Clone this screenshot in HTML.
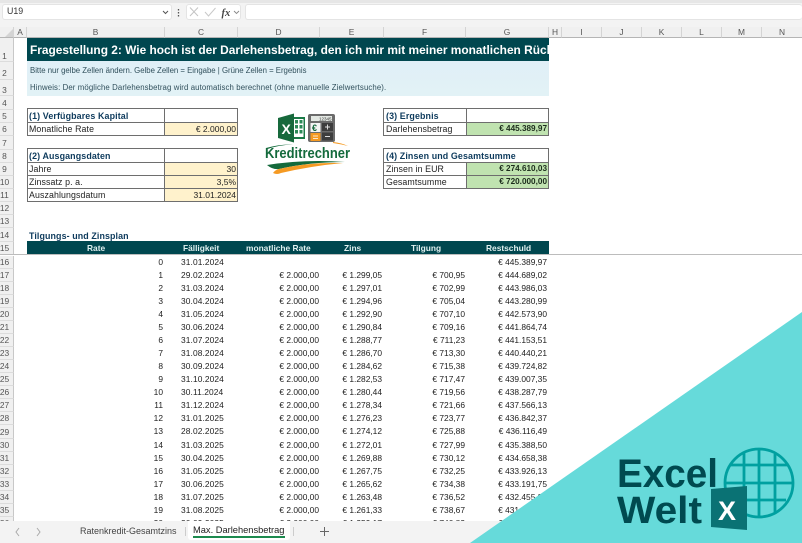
<!DOCTYPE html>
<html lang="de"><head><meta charset="utf-8"><title>Kreditrechner</title>
<style>
*{box-sizing:border-box}
html,body{margin:0;padding:0;background:#fff}
body{position:relative;width:802px;height:543px;overflow:hidden;font-family:"Liberation Sans",sans-serif;font-size:8.4px;color:#222}
div,span{white-space:nowrap}
.top{position:absolute;left:0;top:0;width:802px;height:27px;background:#f3f3f3;border-top:3px solid #e6e6e6}
.box{background:#fff;border:1px solid #e4e4e4;border-radius:3px;height:16px;top:4px;position:absolute}
.ch{top:27px;height:11px;background:#f0f0f0;border-right:1px solid #d4d4d4;border-bottom:1px solid #b5b5b5;text-align:center;font-size:8.4px;line-height:11px;color:#555;position:absolute}
.rh{left:0;width:14px;background:#f0f0f0;border-bottom:1px solid #dcdcdc;border-right:1px solid #c8c8c8;font-size:8.4px;color:#555;text-align:center;position:absolute;padding-right:4px;display:flex;align-items:center;justify-content:center}
.c{position:absolute;height:14px;line-height:12.5px;border:1px solid #6e6e6e;padding:0 2px;font-size:8.8px;color:#222;background:#fff}
.c.h15{height:15px;line-height:14px}
.l{letter-spacing:.1px}
.n{padding-left:1px}
.hd{font-weight:bold;color:#0d3a5c;font-size:8.9px;letter-spacing:.12px}
.y{background:#fff2cc;text-align:right;padding-right:1px;font-size:8.5px}
.g{background:#c0e3b0;text-align:right;font-weight:bold;padding-right:1px;color:#1c2c1c;font-size:8.2px}
.row{position:absolute;left:27px;width:522px;height:13px;line-height:13px;font-size:8.4px;color:#222}
.row span{position:absolute;top:0}
.a{right:386px}.b{left:154px;letter-spacing:.1px}.m{right:230px}.z{right:167px}.t{right:84px}.r{right:2px}
.th span{color:#e0f0f0;font-weight:bold;font-size:8.4px;line-height:14px}
</style></head><body>

<!-- Formula bar -->
<div class="top"></div>
<div class="box" style="left:2px;width:170px"></div>
<div style="position:absolute;left:7px;top:6px;font-size:8.8px;color:#333">U19</div>
<svg style="position:absolute;left:0;top:0" width="250" height="27" fill="none">
<path d="M163 11l2.500 2.500 2.500-2.500" stroke="#555" stroke-width="1"/>
<path d="M178.500 9v1.500M178.500 12v1.500M178.500 15v1.500" stroke="#555" stroke-width="1.300"/>
</svg>
<div class="box" style="left:186px;width:55px"></div>
<div class="box" style="left:245px;width:557px;border-right:0"></div>
<svg style="position:absolute;left:186px;top:4px" width="56" height="16" fill="none">
<path d="M4 3.500l8 8.500M12 3.500l-8 8.500" stroke="#c4c4c4" stroke-width="1"/>
<path d="M19 8l3.500 4 7-8" stroke="#c8c8c8" stroke-width="1"/>
<path d="M48 7l2.500 2.500 2.500-2.500" stroke="#888" stroke-width=".9"/>
<text x="35.500" y="12" font-family="Liberation Serif,serif" font-style="italic" font-weight="bold" font-size="10.500" fill="#444">fx</text>
</svg>

<!-- Column headers -->
<div class="ch" style="left:0;width:14px"></div>
<svg style="position:absolute;left:5px;top:29px" width="9" height="8"><path d="M8 0v8H0z" fill="#d4d4d4"/></svg>
<div class="ch" style="left:14px;width:13px">A</div>
<div class="ch" style="left:27px;width:138px">B</div>
<div class="ch" style="left:165px;width:73px">C</div>
<div class="ch" style="left:238px;width:82px">D</div>
<div class="ch" style="left:320px;width:64px">E</div>
<div class="ch" style="left:384px;width:82px">F</div>
<div class="ch" style="left:466px;width:83px">G</div>
<div class="ch" style="left:549px;width:13px">H</div>
<div class="ch" style="left:562px;width:40px">I</div>
<div class="ch" style="left:602px;width:40px">J</div>
<div class="ch" style="left:642px;width:40px">K</div>
<div class="ch" style="left:682px;width:40px">L</div>
<div class="ch" style="left:722px;width:40px">M</div>
<div class="ch" style="left:762px;width:40px;border-right:0">N</div>

<!-- Row headers -->
<div class="rh" style="top:38px;height:24px;align-items:flex-end">1</div>
<div class="rh" style="top:62px;height:18px;align-items:flex-end;padding-bottom:1px">2</div>
<div class="rh" style="top:80px;height:16px;align-items:flex-end">3</div>
<div class="rh" style="top:96px;height:14px">4</div>
<div class="rh" style="top:110px;height:13px">5</div>
<div class="rh" style="top:123px;height:13px">6</div>
<div class="rh" style="top:136px;height:14px">7</div>
<div class="rh" style="top:150px;height:13px">8</div>
<div class="rh" style="top:163px;height:13px">9</div>
<div class="rh" style="top:176px;height:13px">10</div>
<div class="rh" style="top:189px;height:13px">11</div>
<div class="rh" style="top:202px;height:13px">12</div>
<div class="rh" style="top:215px;height:13px">13</div>
<div class="rh" style="top:228px;height:14px">14</div>
<div class="rh" style="top:242px;height:13px">15</div>
<div class="rh" style="top:256px;height:13px">16</div>
<div class="rh" style="top:269px;height:13px">17</div>
<div class="rh" style="top:282px;height:13px">18</div>
<div class="rh" style="top:295px;height:13px">19</div>
<div class="rh" style="top:308px;height:13px">20</div>
<div class="rh" style="top:321px;height:13px">21</div>
<div class="rh" style="top:334px;height:13px">22</div>
<div class="rh" style="top:347px;height:13px">23</div>
<div class="rh" style="top:360px;height:13px">24</div>
<div class="rh" style="top:373px;height:13px">25</div>
<div class="rh" style="top:386px;height:13px">26</div>
<div class="rh" style="top:399px;height:13px">27</div>
<div class="rh" style="top:412px;height:13px">28</div>
<div class="rh" style="top:425px;height:14px">29</div>
<div class="rh" style="top:439px;height:13px">30</div>
<div class="rh" style="top:452px;height:13px">31</div>
<div class="rh" style="top:465px;height:13px">32</div>
<div class="rh" style="top:478px;height:13px">33</div>
<div class="rh" style="top:491px;height:13px">34</div>
<div class="rh" style="top:504px;height:13px">35</div>
<div class="rh" style="top:517px;height:13px">36</div>

<!-- Title block -->
<div style="position:absolute;left:27px;top:38px;width:522px;height:23px;background:#00474f;color:#fff;font-weight:bold;font-size:11.900px;line-height:24px;padding-left:3px;overflow:hidden">Fragestellung 2: Wie hoch ist der Darlehensbetrag, den ich mir mit meiner monatlichen Rückzahlung leisten kann?</div>
<div style="position:absolute;left:27px;top:61px;width:522px;height:35px;background:linear-gradient(#e0eff7,#e2f2f6)"></div>
<div style="position:absolute;left:30px;top:65px;font-size:7.800px;color:#31505c;line-height:12px;letter-spacing:-.01px">Bitte nur gelbe Zellen ändern. Gelbe Zellen = Eingabe | Grüne Zellen = Ergebnis</div>
<div style="position:absolute;left:30px;top:82px;font-size:7.800px;color:#31505c;line-height:12px;letter-spacing:.11px">Hinweis: Der mögliche Darlehensbetrag wird automatisch berechnet (ohne manuelle Zielwertsuche).</div>

<!-- Box 1 -->
<div class="c hd h15 n" style="left:27px;top:108px;width:138px">(1) Verfügbares Kapital</div>
<div class="c h15" style="left:164px;top:108px;width:74px"></div>
<div class="c l n" style="left:27px;top:122px;width:138px">Monatliche Rate</div>
<div class="c y" style="left:164px;top:122px;width:74px">€ 2.000,00</div>

<!-- Box 2 -->
<div class="c hd h15 n" style="left:27px;top:148px;width:138px">(2) Ausgangsdaten</div>
<div class="c h15" style="left:164px;top:148px;width:74px"></div>
<div class="c l n" style="left:27px;top:162px;width:138px">Jahre</div>
<div class="c y" style="left:164px;top:162px;width:74px">30</div>
<div class="c l n" style="left:27px;top:175px;width:138px">Zinssatz p. a.</div>
<div class="c y" style="left:164px;top:175px;width:74px">3,5%</div>
<div class="c l n" style="left:27px;top:188px;width:138px">Auszahlungsdatum</div>
<div class="c y" style="left:164px;top:188px;width:74px">31.01.2024</div>

<!-- Box 3 -->
<div class="c hd h15" style="left:383px;top:108px;width:84px">(3) Ergebnis</div>
<div class="c h15" style="left:466px;top:108px;width:83px"></div>
<div class="c l" style="left:383px;top:122px;width:84px">Darlehensbetrag</div>
<div class="c g" style="left:466px;top:122px;width:83px">€ 445.389,97</div>

<!-- Box 4 -->
<div class="c hd h15" style="left:383px;top:148px;width:166px">(4) Zinsen und Gesamtsumme</div>
<div class="c l" style="left:383px;top:162px;width:84px">Zinsen in EUR</div>
<div class="c g" style="left:466px;top:162px;width:83px">€ 274.610,03</div>
<div class="c l" style="left:383px;top:175px;width:84px">Gesamtsumme</div>
<div class="c g" style="left:466px;top:175px;width:83px">€ 720.000,00</div>

<!-- Kreditrechner logo -->
<svg style="position:absolute;left:255px;top:105px" width="110" height="80" viewBox="0 0 110 80">
<rect x="37" y="12" width="13" height="22" fill="#1a7a46"/>
<path d="M38 14h10.500v18H38z" fill="#fff"/>
<path d="M40 15h3v3.500h-3zM44.500 15h3v3.500h-3zM40 20h3v3.500h-3zM44.500 20h3v3.500h-3zM40 25h3v3.500h-3zM44.500 25h3v3.500h-3z" fill="#2b8a57"/>
<path d="M23 13l16-4.500v29L23 33z" fill="#17693c"/>
<text x="26.500" y="29" font-size="14" font-weight="bold" fill="#fff">X</text>
<rect x="53" y="9" width="27" height="28" rx="2" fill="#6b6b6b"/>
<rect x="56" y="11" width="21" height="5" fill="#e3e8e3"/>
<text x="64" y="15.500" font-size="4.500" fill="#333">12345</text>
<rect x="55.500" y="18" width="10" height="9" fill="#f4f4f4"/><text x="57" y="26" font-size="9" font-weight="bold" fill="#14683c">€</text>
<rect x="67" y="18" width="11" height="8" fill="#3d3d3d"/><path d="M70 22h5M72.500 19.500v5" stroke="#ddd"/>
<rect x="55.500" y="28" width="10" height="8" fill="#f59a23"/><path d="M58 31h5M58 33.500h5" stroke="#fff" stroke-width=".8"/>
<rect x="67" y="27.500" width="11" height="8" fill="#3d3d3d"/><path d="M70 31.500h5" stroke="#ddd"/>
<path d="M11 43q14-4 27-3.500-15 .5-27 5z" fill="#11693a"/>
<path d="M78 37q9 1 15 4-8-2-15-3z" fill="#f59a23"/>
<text x="10" y="53" font-size="15" font-weight="bold" fill="#146a3c" textLength="85" lengthAdjust="spacingAndGlyphs">Kreditrechner</text>
<path d="M12 60q38-6 78-3-36 0-66 7-6 1-12-4z" fill="#14693b"/>
<path d="M18 68q2-3 6-4 30-7 64-6-32 3-62 10-4 2-8 0z" fill="#f59a23"/>
</svg>

<!-- Table title + header -->
<div style="position:absolute;left:29px;top:230px;font-weight:bold;font-size:8.900px;color:#0d3a5c;line-height:13px;letter-spacing:.1px">Tilgungs- und Zinsplan</div>
<div class="row th" style="top:241px;height:13px;background:#00474f">
<span style="left:60px">Rate</span><span style="left:156px">Fälligkeit</span><span style="left:219px">monatliche Rate</span><span style="left:317px">Zins</span><span style="left:384px">Tilgung</span><span style="left:459px">Restschuld</span>
</div>
<div style="position:absolute;left:0;top:254px;width:802px;height:1px;background:#bcbcbc"></div>

<!-- Data -->
<div class="row" style="top:256px"><span class="a">0</span><span class="b">31.01.2024</span><span class="r">€ 445.389,97</span></div>
<div class="row" style="top:269px"><span class="a">1</span><span class="b">29.02.2024</span><span class="m">€ 2.000,00</span><span class="z">€ 1.299,05</span><span class="t">€ 700,95</span><span class="r">€ 444.689,02</span></div>
<div class="row" style="top:282px"><span class="a">2</span><span class="b">31.03.2024</span><span class="m">€ 2.000,00</span><span class="z">€ 1.297,01</span><span class="t">€ 702,99</span><span class="r">€ 443.986,03</span></div>
<div class="row" style="top:295px"><span class="a">3</span><span class="b">30.04.2024</span><span class="m">€ 2.000,00</span><span class="z">€ 1.294,96</span><span class="t">€ 705,04</span><span class="r">€ 443.280,99</span></div>
<div class="row" style="top:308px"><span class="a">4</span><span class="b">31.05.2024</span><span class="m">€ 2.000,00</span><span class="z">€ 1.292,90</span><span class="t">€ 707,10</span><span class="r">€ 442.573,90</span></div>
<div class="row" style="top:321px"><span class="a">5</span><span class="b">30.06.2024</span><span class="m">€ 2.000,00</span><span class="z">€ 1.290,84</span><span class="t">€ 709,16</span><span class="r">€ 441.864,74</span></div>
<div class="row" style="top:334px"><span class="a">6</span><span class="b">31.07.2024</span><span class="m">€ 2.000,00</span><span class="z">€ 1.288,77</span><span class="t">€ 711,23</span><span class="r">€ 441.153,51</span></div>
<div class="row" style="top:347px"><span class="a">7</span><span class="b">31.08.2024</span><span class="m">€ 2.000,00</span><span class="z">€ 1.286,70</span><span class="t">€ 713,30</span><span class="r">€ 440.440,21</span></div>
<div class="row" style="top:360px"><span class="a">8</span><span class="b">30.09.2024</span><span class="m">€ 2.000,00</span><span class="z">€ 1.284,62</span><span class="t">€ 715,38</span><span class="r">€ 439.724,82</span></div>
<div class="row" style="top:373px"><span class="a">9</span><span class="b">31.10.2024</span><span class="m">€ 2.000,00</span><span class="z">€ 1.282,53</span><span class="t">€ 717,47</span><span class="r">€ 439.007,35</span></div>
<div class="row" style="top:386px"><span class="a">10</span><span class="b">30.11.2024</span><span class="m">€ 2.000,00</span><span class="z">€ 1.280,44</span><span class="t">€ 719,56</span><span class="r">€ 438.287,79</span></div>
<div class="row" style="top:399px"><span class="a">11</span><span class="b">31.12.2024</span><span class="m">€ 2.000,00</span><span class="z">€ 1.278,34</span><span class="t">€ 721,66</span><span class="r">€ 437.566,13</span></div>
<div class="row" style="top:412px"><span class="a">12</span><span class="b">31.01.2025</span><span class="m">€ 2.000,00</span><span class="z">€ 1.276,23</span><span class="t">€ 723,77</span><span class="r">€ 436.842,37</span></div>
<div class="row" style="top:425px"><span class="a">13</span><span class="b">28.02.2025</span><span class="m">€ 2.000,00</span><span class="z">€ 1.274,12</span><span class="t">€ 725,88</span><span class="r">€ 436.116,49</span></div>
<div class="row" style="top:439px"><span class="a">14</span><span class="b">31.03.2025</span><span class="m">€ 2.000,00</span><span class="z">€ 1.272,01</span><span class="t">€ 727,99</span><span class="r">€ 435.388,50</span></div>
<div class="row" style="top:452px"><span class="a">15</span><span class="b">30.04.2025</span><span class="m">€ 2.000,00</span><span class="z">€ 1.269,88</span><span class="t">€ 730,12</span><span class="r">€ 434.658,38</span></div>
<div class="row" style="top:465px"><span class="a">16</span><span class="b">31.05.2025</span><span class="m">€ 2.000,00</span><span class="z">€ 1.267,75</span><span class="t">€ 732,25</span><span class="r">€ 433.926,13</span></div>
<div class="row" style="top:478px"><span class="a">17</span><span class="b">30.06.2025</span><span class="m">€ 2.000,00</span><span class="z">€ 1.265,62</span><span class="t">€ 734,38</span><span class="r">€ 433.191,75</span></div>
<div class="row" style="top:491px"><span class="a">18</span><span class="b">31.07.2025</span><span class="m">€ 2.000,00</span><span class="z">€ 1.263,48</span><span class="t">€ 736,52</span><span class="r">€ 432.455,23</span></div>
<div class="row" style="top:504px"><span class="a">19</span><span class="b">31.08.2025</span><span class="m">€ 2.000,00</span><span class="z">€ 1.261,33</span><span class="t">€ 738,67</span><span class="r">€ 431.716,56</span></div>
<div class="row" style="top:517px"><span class="a">20</span><span class="b">30.09.2025</span><span class="m">€ 2.000,00</span><span class="z">€ 1.259,17</span><span class="t">€ 740,83</span><span class="r">€ 430.975,73</span></div>

<!-- Tab bar -->
<div style="position:absolute;left:0;top:521px;width:802px;height:22px;background:#f3f3f3"></div>
<svg style="position:absolute;left:0;top:521px" width="340" height="22" fill="none">
<path d="M19 7l-3 4 3 4" stroke="#aaa"/><path d="M37 7l3 4-3 4" stroke="#aaa"/>
<path d="M185.500 6v9M293.500 6v9" stroke="#ccc"/>
<path d="M320 10.500h9M324.500 6v9" stroke="#666"/>
</svg>
<div style="position:absolute;left:80px;top:525px;font-size:9px;color:#444;line-height:13px">Ratenkredit-Gesamtzins</div>
<div style="position:absolute;left:188px;top:521px;width:102px;height:19px;background:#fff;border-radius:0 0 3px 3px"></div>
<div style="position:absolute;left:193px;top:524px;font-size:9.300px;color:#222;line-height:13px">Max. Darlehensbetrag</div>
<div style="position:absolute;left:193px;top:536px;width:92px;height:2px;background:#1c8a4e"></div>

<!-- Teal corner -->
<svg style="position:absolute;left:0;top:0" width="802" height="543" viewBox="0 0 802 543">
<polygon points="802,312 802,543 470,543" fill="#66dada"/>
<g fill="none" stroke="#00a0a0" stroke-width="2.800">
<circle cx="759" cy="483" r="34"/>
<path d="M725 483h68M730 465h58M732 500h54M744 452v62M759 449v68M775 454v58"/>
</g>
<path d="M711 489l36-3v44l-36-3z" fill="#0a7274"/>
<text x="718" y="520" font-size="27" font-weight="bold" fill="#fff">X</text>
<text x="617" y="487" font-size="40" font-weight="bold" fill="#004a50" textLength="101" lengthAdjust="spacingAndGlyphs">Excel</text>
<text x="617" y="523" font-size="38" font-weight="bold" fill="#004a50" textLength="85" lengthAdjust="spacingAndGlyphs">Welt</text>
</svg>
</body></html>
